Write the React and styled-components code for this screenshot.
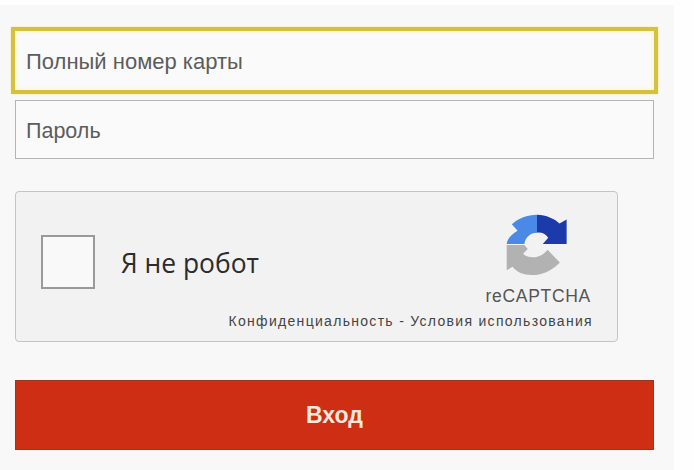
import styled, { createGlobalStyle } from 'styled-components';

const GlobalStyle = createGlobalStyle`
    html, body{
        margin:0;
        padding:0;
        background:#fefefe;
    }
`;

const Page = styled.div`
    width:674px;
    height:465px;
    margin-top:5px;
    box-sizing:border-box;
    padding:22px 0 0 11px;
    background:#f8f8f8;
    font-family:"Liberation Sans", Arial, sans-serif;
    overflow:hidden;
`;

const Form = styled.form`
    width:647px;
    display:flex;
    flex-direction:column;
`;

const Field = styled.div`
    box-sizing:border-box;
    display:flex;
    align-items:center;
    color:#5c5c5c;
    background:#fafafa;
    ${({ $focused }) => $focused ? `
        width:647px;
        height:67px;
        padding:2px 0 0 11px;
        font-size:22px;
        border:4px solid #d6c13e;
        box-shadow:inset 0 0 4px #fff7a0, 0 0 2px #f3e98c;
    ` : `
        width:639px;
        height:59px;
        margin:6px 0 0 4px;
        padding:3px 0 0 10px;
        font-size:21.5px;
        border:1px solid #b4b4b4;
    `}
`;

const Captcha = styled.div`
    box-sizing:border-box;
    width:603px;
    height:151px;
    margin:32px 0 0 4px;
    padding:0 24px 0 25px;
    display:flex;
    align-items:stretch;
    justify-content:space-between;
    background:#f2f2f2;
    border:1px solid #c4c4c4;
    border-radius:4px;
`;

const CheckRow = styled.div`
    display:flex;
    align-items:center;
    gap:26px;
    padding-bottom:10px;
    flex:none;
`;

const CheckBox = styled.div`
    box-sizing:border-box;
    width:54px;
    height:54px;
    flex:none;
    background:#f9f9f9;
    border:2px solid #9a9a9a;
`;

const CheckLabel = styled.span`
    padding-top:3px;
    font-family:"Open Sans", "Noto Sans", sans-serif;
    font-size:26.4px;
    color:#2c2c2c;
    white-space:nowrap;
`;

const Brand = styled.div`
    display:flex;
    flex-direction:column;
    align-items:flex-end;
    flex:none;
    width:0;
    padding-top:21px;
`;

const Logo = styled.svg`
    width:62px;
    height:63px;
    flex:none;
    margin-right:25px;
    display:block;
`;

const BrandName = styled.div`
    margin:10px 2px 0 0;
    font-size:17.5px;
    line-height:20px;
    color:#555;
    letter-spacing:0.7px;
`;

const Terms = styled.div`
    margin-top:7px;
    font-size:14px;
    line-height:16px;
    color:#444;
    letter-spacing:1.3px;
    white-space:nowrap;
`;

const Submit = styled.button`
    box-sizing:border-box;
    width:639px;
    height:70px;
    margin:38px 0 0 4px;
    background:#cd2e14;
    border:1px solid #a3331f;
    color:#fbe9dd;
    font-family:"Liberation Sans", Arial, sans-serif;
    font-size:23px;
    font-weight:bold;
    padding:0;
`;

const App = () => {
    return (
        <Page>
            <GlobalStyle />
            <Form>
                <Field $focused>Полный номер карты</Field>
                <Field>Пароль</Field>
                <Captcha>
                    <CheckRow>
                        <CheckBox />
                        <CheckLabel>Я не робот</CheckLabel>
                    </CheckRow>
                    <Brand>
                        <Logo viewBox="115 70 180 185">
                            <path fill="#1c3aa9" d="M205 75 C232 76 256 86 271 101 L292 89 L292 161 L222 161 L238 143 C230 131 218 126 205 128 Z" />
                            <path fill="#4a8ae6" d="M205 75 C176 75 150 86 131 103 L148 122 C130 132 118 146 116 161 L168 161 C170 142 186 128 205 128 Z" />
                            <path fill="#b2b2b2" d="M116 164 L168 164 L178 176 L164 190 C182 206 216 204 236 178 L272 215 C246 242 218 252 190 252 C164 252 146 244 133 228 L116 238 Z" />
                        </Logo>
                        <BrandName>reCAPTCHA</BrandName>
                        <Terms>Конфиденциальность - Условия использования</Terms>
                    </Brand>
                </Captcha>
                <Submit type="button">Вход</Submit>
            </Form>
        </Page>
    )
}

export default App;
